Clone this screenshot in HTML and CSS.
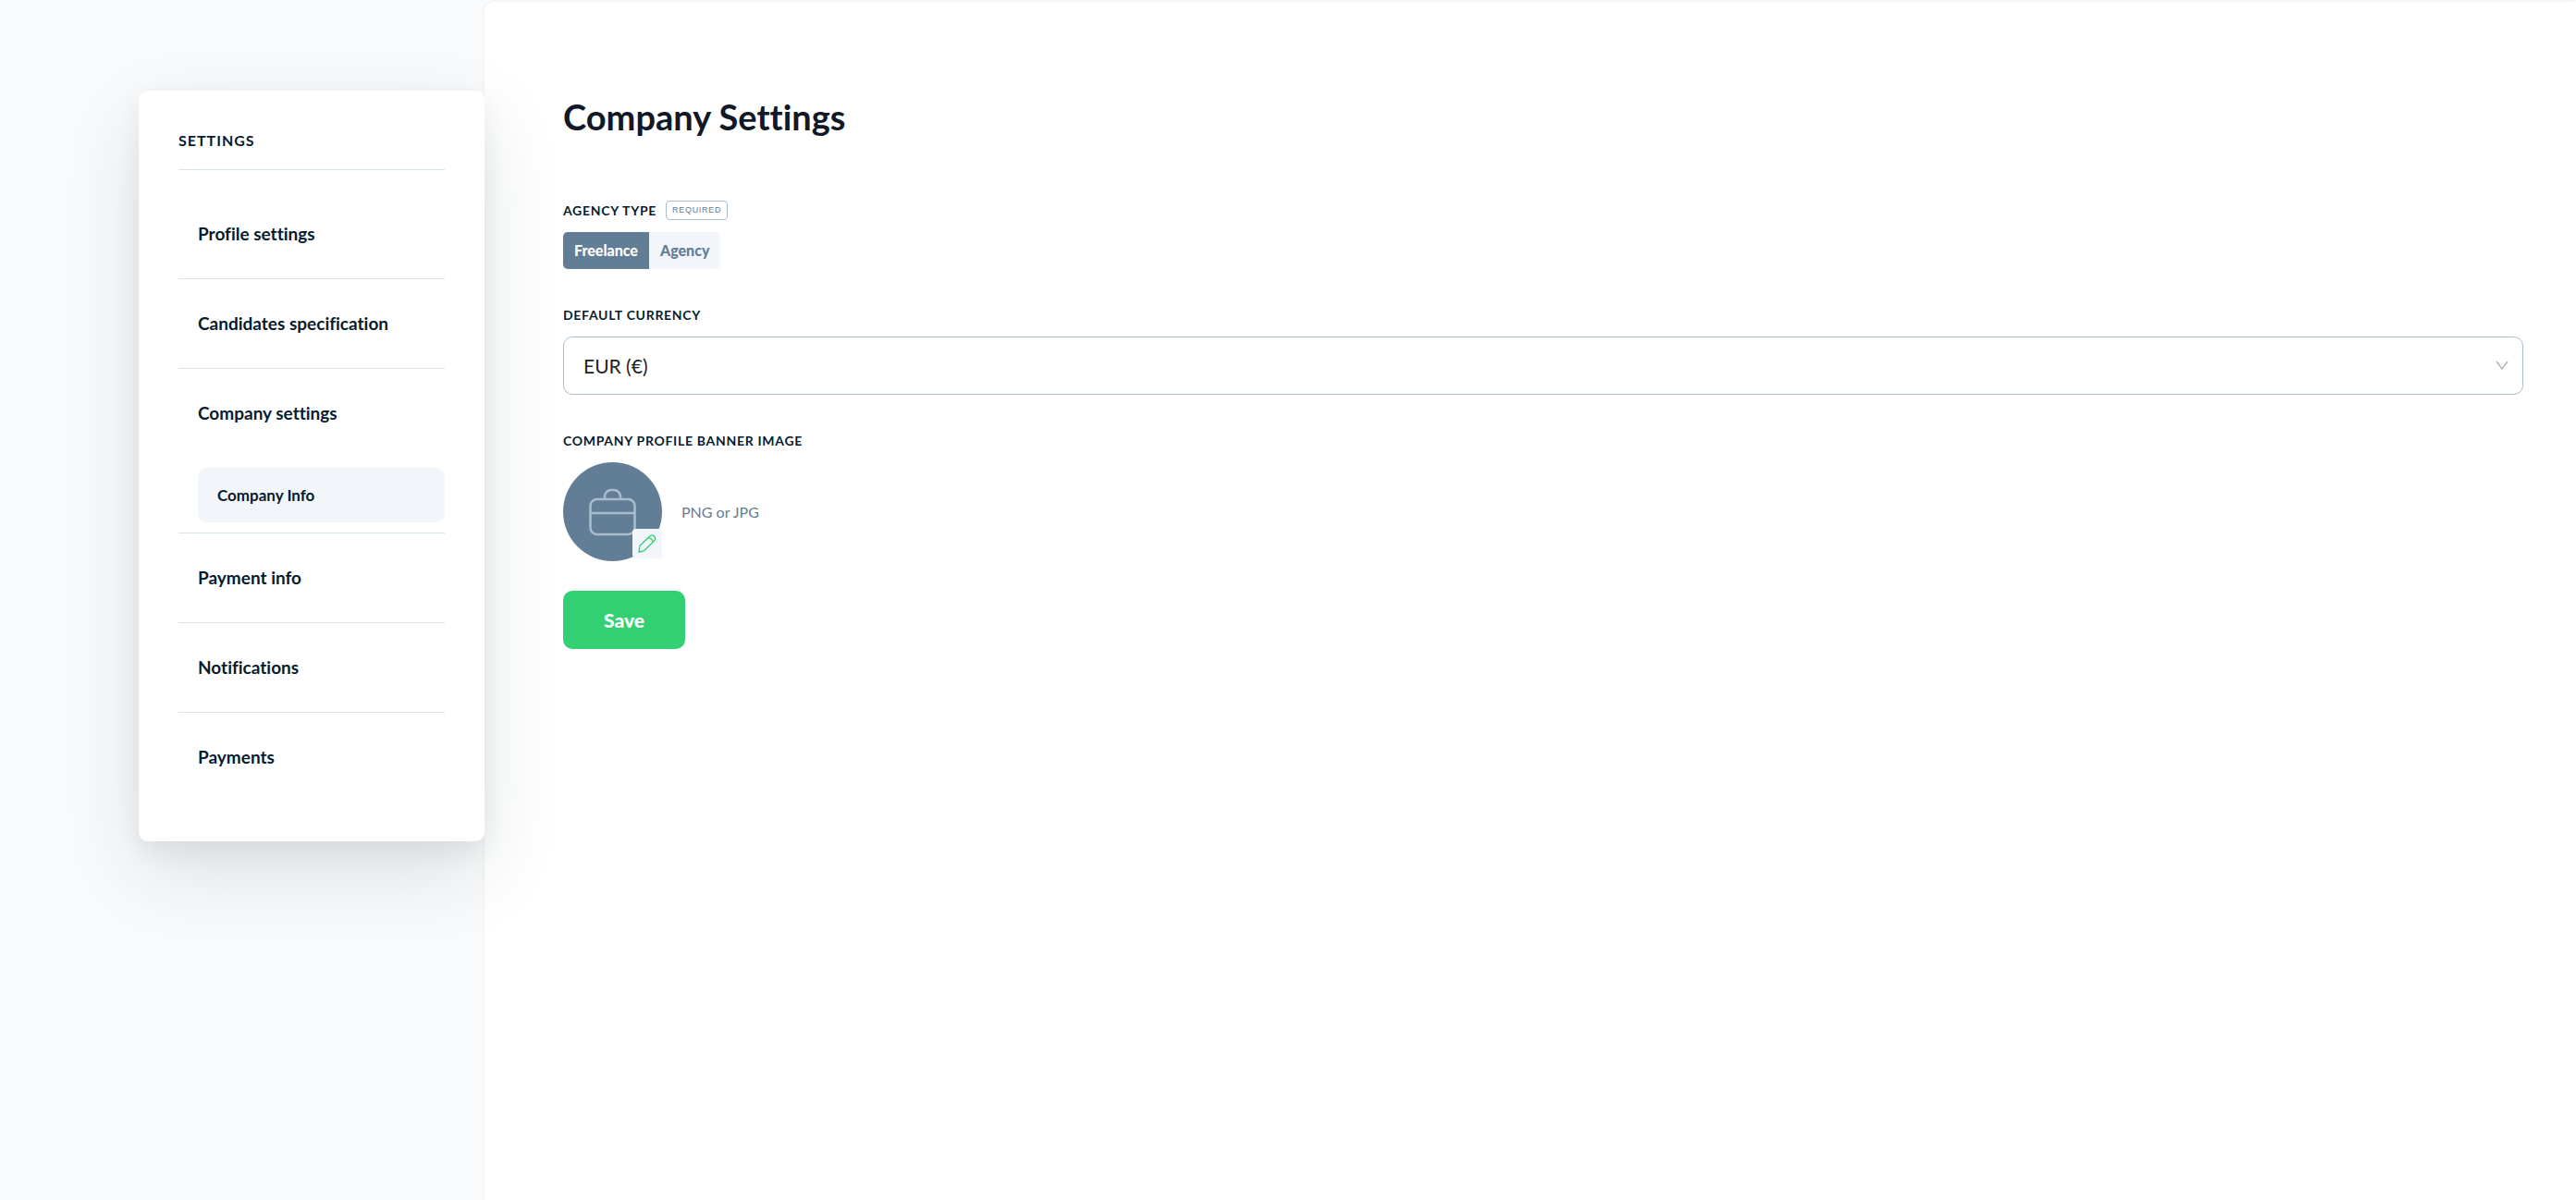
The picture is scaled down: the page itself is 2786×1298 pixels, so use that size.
FILE: index.html
```html
<!DOCTYPE html>
<html lang="en">
<head>
  <meta charset="UTF-8">
  <meta name="viewport" content="width=device-width, initial-scale=1">
  <title>Company Settings</title>
  <link rel="stylesheet" href="styles.css">
</head>
<body>
<div class="layout">
  <aside class="sidebar">
    <nav class="menu" aria-labelledby="menuTitle">
      <h2 class="menu-title" id="menuTitle">Settings</h2>
      <ul class="menu-list">
        <li><a class="menu-link" href="#profile">Profile settings</a></li>
        <li><a class="menu-link" href="#candidates">Candidates specification</a></li>
        <li>
          <a class="menu-link" href="#company">Company settings</a>
          <a class="submenu-link" href="#company-info" aria-current="page">Company Info</a>
        </li>
        <li><a class="menu-link" href="#payment-info">Payment info</a></li>
        <li><a class="menu-link" href="#notifications">Notifications</a></li>
        <li><a class="menu-link" href="#payments">Payments</a></li>
      </ul>
    </nav>
  </aside>
  <main class="content">
    <h1>Company Settings</h1>
    <form class="form">
      <fieldset class="field">
        <legend class="label">Agency type <span class="badge">Required</span></legend>
        <div class="toggle">
          <label class="option"><input type="radio" name="agencyType" value="freelance" checked><span>Freelance</span></label>
          <label class="option"><input type="radio" name="agencyType" value="agency"><span>Agency</span></label>
        </div>
      </fieldset>
      <div class="field">
        <label class="label" for="currency">Default currency</label>
        <div class="select">
          <select id="currency">
            <option>EUR (€)</option>
            <option>USD ($)</option>
            <option>GBP (£)</option>
          </select>
          <svg class="chevron" viewBox="0 0 14 10" aria-hidden="true"><path d="M1 1l6 8 6-8"/></svg>
        </div>
      </div>
      <div class="field">
        <span class="label">Company profile banner image</span>
        <div class="upload">
          <div class="avatar">
            <svg class="briefcase" viewBox="0 0 52 52" aria-hidden="true">
              <rect x="1.5" y="12" width="48" height="38" rx="7"/>
              <path d="M1.5 27h48M17 12V9a7 7 0 0 1 7-7h3a7 7 0 0 1 7 7v3"/>
            </svg>
            <button class="edit" type="button" aria-label="Edit image">
              <svg viewBox="0 0 20 20" aria-hidden="true">
                <path d="M1 19L2 12.3 13 1.8c3-2.6 7.4 1.7 4.8 4.9L6.5 17.8zM11.2 3.6c2.5.3 4.5 2.3 4.9 4.9"/>
              </svg>
            </button>
          </div>
          <span class="hint">PNG or JPG</span>
        </div>
      </div>
      <button class="save" type="submit">Save</button>
    </form>
  </main>
</div>
</body>
</html>
```
FILE: styles.css
```css
* { box-sizing: border-box; }
body { margin: 0; background: #f9fafc; color: #061c2e; font-family: Lato, sans-serif; font-variant-ligatures: none; }
button, select { font-family: inherit; }
.layout { display: flex; align-items: stretch; min-height: 100vh; padding-top: 2px; }

/* sidebar */
.sidebar { position: relative; z-index: 1; flex: 0 0 524px; padding: 96px 0 96px 150px; }
.menu { padding: 43px; background: #fff; border-radius: 10px; box-shadow: 0 10px 26px rgba(10, 40, 40, 0.06), 0 32px 86px rgba(10, 40, 40, 0.12); }
.menu-title { margin: 0 0 21px; padding-bottom: 20px; border-bottom: 1px solid #dae4eb; font-size: 16px; line-height: 22px; letter-spacing: 1px; text-transform: uppercase; }
.menu-list { margin: 0; padding: 0; list-style: none; }
.menu-list li { padding-left: 21px; border-bottom: 1px solid #dae4eb; }
.menu-list li:last-child { border-bottom: 0; }
.menu-link { display: block; color: inherit; font-size: 19px; font-weight: 700; line-height: 96px; text-decoration: none; }
.submenu-link { display: block; margin: 11px 0; padding: 0 21px; background: #f2f5fa; border-radius: 10px; color: inherit; font-size: 17px; font-weight: 700; line-height: 59px; text-decoration: none; }

/* content */
.content { flex: 1; min-width: 0; padding: 100px 57px 60px 85px; background: #fff; border-radius: 10px 0 0 0; box-shadow: 0 0 4px rgba(6, 28, 46, 0.06); }
h1 { margin: 0 0 66px; color: #111827; font-size: 38px; line-height: 48px; }
.form { display: flex; flex-direction: column; align-items: stretch; }
.field { min-width: 0; margin: 0 0 38px; padding: 0; border: 0; }
div.field:last-of-type { margin-bottom: 32px; }
.label { display: flex; align-items: center; gap: 10px; height: 22px; margin-bottom: 13px; padding: 0; font-size: 14px; font-weight: 700; letter-spacing: 0.05em; text-transform: uppercase; }
.badge { padding: 0 6px; border: 1px solid #a9bccc; border-radius: 4px; color: #627d96; font-family: "Liberation Sans", sans-serif; font-size: 9px; font-weight: 400; line-height: 19px; }

.toggle { display: flex; width: fit-content; overflow: hidden; border-radius: 5px; background: #f2f5fa; }
.option { position: relative; color: #627d96; font-size: 16px; font-weight: 900; cursor: pointer; }
.option input { position: absolute; margin: 0; opacity: 0; }
.option span { display: block; padding: 0 12px; line-height: 40px; }
.option input:checked + span { background: #627d96; color: #fff; }

.select { position: relative; }
.select select { display: block; width: 100%; height: 63px; padding: 0 50px 0 21px; appearance: none; background: #fff; border: 1px solid #a9bccc; border-radius: 10px; color: #222; font-size: 21px; }
.chevron { position: absolute; top: 26px; right: 16px; width: 14px; height: 10px; fill: none; stroke: #b5b5b5; stroke-width: 1.5; pointer-events: none; }

.upload { display: flex; align-items: center; gap: 21px; }
.avatar { position: relative; display: flex; align-items: center; justify-content: center; width: 107px; height: 107px; border-radius: 50%; background: #627d96; }
.briefcase { width: 52px; height: 52px; fill: none; stroke: #a9bccc; stroke-width: 2.6; }
.edit { position: absolute; right: 0; bottom: 3px; display: flex; align-items: center; justify-content: center; width: 32px; height: 32px; padding: 0; background: #f2f5fa; border: 0; border-radius: 4px; cursor: pointer; }
.edit svg { width: 20px; height: 20px; fill: none; stroke: #33d073; stroke-width: 1.3; stroke-linejoin: round; }
.hint { color: #627d96; font-size: 16px; }
.save { align-self: flex-start; height: 63px; padding: 0 44px; background: #33d073; border: 0; border-radius: 10px; color: #fff; font-size: 21px; font-weight: 900; cursor: pointer; }
```
